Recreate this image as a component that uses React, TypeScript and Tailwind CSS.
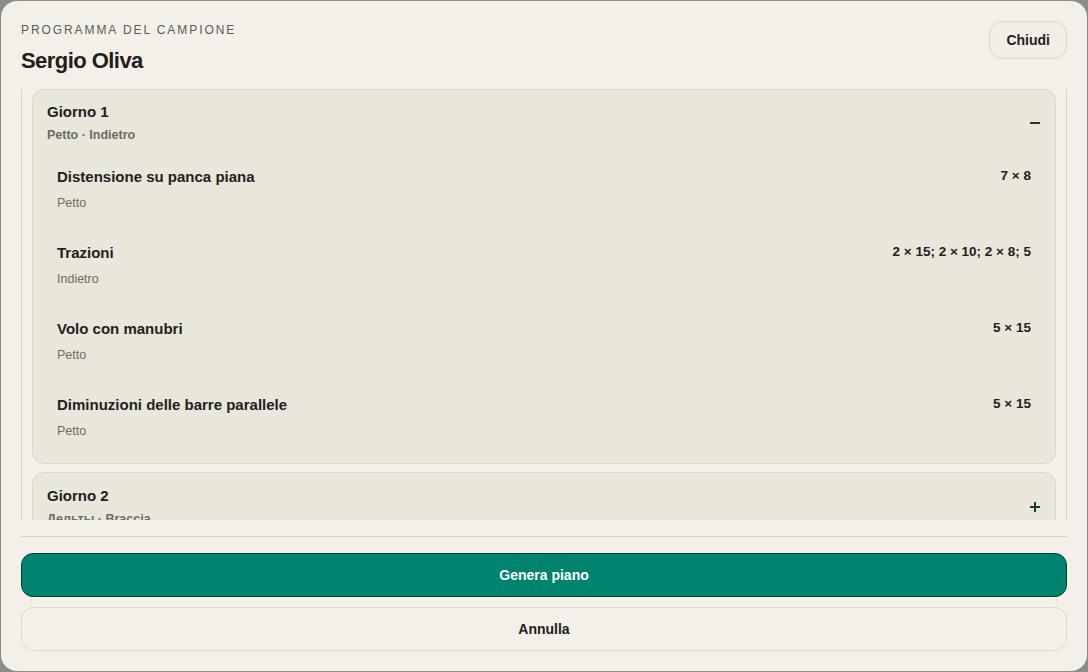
import React from "react"

type Exercise = {
  name: string
  muscle: string
  sets: string
}

type Day = {
  title: string
  muscles: string
  exercises: Exercise[]
}

const days: Day[] = [
  {
    title: "Giorno 1",
    muscles: "Petto · Indietro",
    exercises: [
      { name: "Distensione su panca piana", muscle: "Petto", sets: "7 × 8" },
      { name: "Trazioni", muscle: "Indietro", sets: "2 × 15; 2 × 10; 2 × 8; 5" },
      { name: "Volo con manubri", muscle: "Petto", sets: "5 × 15" },
      { name: "Diminuzioni delle barre parallele", muscle: "Petto", sets: "5 × 15" },
    ],
  },
  {
    title: "Giorno 2",
    muscles: "Дельты · Braccia",
    exercises: [],
  },
]

const ToggleIcon = ({ open }: { open: boolean }) => (
  <svg width="10" height="10" viewBox="0 0 10 10" className="text-[#1b3a35]">
    <line x1="0" y1="5" x2="10" y2="5" stroke="currentColor" strokeWidth="2" />
    {!open && <line x1="5" y1="0" x2="5" y2="10" stroke="currentColor" strokeWidth="2" />}
  </svg>
)

const DayCard = ({ day, open }: { day: Day; open: boolean }) => (
  <div className="rounded-xl border border-[#dbd7cb] bg-[#e9e6dc]">
    <div
      className={
        open
          ? "flex items-center justify-between pl-[14px] pr-[15px] pt-[12px] pb-[7px]"
          : "flex items-center justify-between pl-[14px] pr-[15px] pt-[13px] pb-[12px]"
      }
    >
      <div>
        <div className="text-[15px] font-bold leading-5 text-[#22211c]">{day.title}</div>
        <div className="mt-1 text-[12.5px] font-bold leading-[18px] text-[#6e6c64]">
          {day.muscles}
        </div>
      </div>
      <ToggleIcon open={open} />
    </div>
    {open && (
      <div className="px-[14px] pb-2">
        {day.exercises.map((ex) => (
          <div key={ex.name} className="flex justify-between px-[10px] pt-4 pb-[15px]">
            <div>
              <div className="text-[15px] font-bold leading-5 text-[#22211c]">{ex.name}</div>
              <div className="mt-[7px] text-[12.5px] leading-[18px] text-[#6e6c64]">{ex.muscle}</div>
            </div>
            <div className="-mt-px text-[13.5px] font-bold leading-5 text-[#22211c]">{ex.sets}</div>
          </div>
        ))}
      </div>
    )}
  </div>
)

export default function App() {
  return (
    <div
      className="h-[672px] w-[1088px] bg-[#8d8c86] p-px"
      style={{ fontFamily: '"Liberation Sans", Arial, sans-serif' }}
    >
      <div className="flex h-full flex-col overflow-hidden rounded-2xl bg-[#f2f0e8]">
        <div className="flex items-start justify-between px-5 pt-5 pb-[14px]">
          <div className="pt-px">
            <div className="text-[12px] uppercase leading-4 tracking-[0.16em] text-[#5c5b55]">
              Programma del campione
            </div>
            <h1 className="mt-[9px] text-[22px] font-bold leading-7 tracking-tight text-[#1f1e1a]">
              Sergio Oliva
            </h1>
          </div>
          <button
            type="button"
            className="h-[38px] rounded-xl border border-[#d9d6cc] bg-[#f0eee6] px-4 text-[14px] font-bold text-[#22211c]"
          >
            Chiudi
          </button>
        </div>

        <div className="mx-5 min-h-0 flex-1 overflow-hidden border-x border-[#d6d2c7] px-[10px]">
          <div className="flex flex-col gap-2">
            {days.map((day, i) => (
              <DayCard key={day.title} day={day} open={i === 0} />
            ))}
          </div>
        </div>

        <div className="mx-5 mt-4 flex flex-col gap-[10px] border-t border-[#d6d2c7] pt-4 pb-5">
          <button
            type="button"
            className="h-11 rounded-xl border border-[#0e3a34] bg-[#00846f] text-[14px] font-bold text-white"
          >
            Genera piano
          </button>
          <button
            type="button"
            className="h-11 rounded-xl border border-[#dcd9cf] bg-[#f2f0e8] text-[14px] font-bold text-[#22211c]"
          >
            Annulla
          </button>
        </div>
      </div>
    </div>
  )
}
